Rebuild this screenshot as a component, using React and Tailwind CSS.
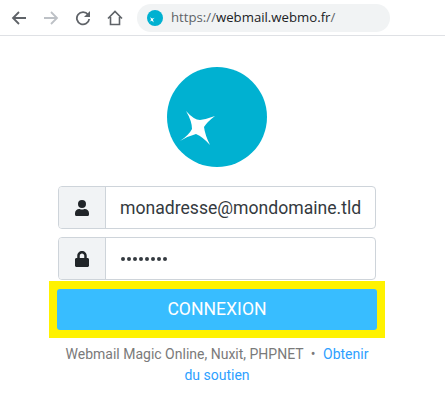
import React from "react";

const Star = ({ className }) => (
  <svg viewBox="0 0 100 100" className={className}>
    <circle cx="50" cy="50" r="50" fill="#00b1d1" />
    <path d="M19 44 Q27 53 33 53 Q40 52 48 49 Q40 55 37 60 Q38 68 43 78 Q36 70 29 67 Q21 69 13 74 Q22 68 25 62 Q25 54 19 44 Z" fill="#ffffff" />
  </svg>
);

export default function App() {
  return (
    <div className="w-[445px] h-[420px] bg-white overflow-hidden" style={{ fontFamily: "Roboto, sans-serif" }}>
      <div className="h-[36px] flex items-center border-b border-[#dfe1e5] pt-[1px]">
        <div className="flex items-center ml-[11px] gap-[16px]">
          <svg width="16" height="16" viewBox="0 0 16 16" fill="none" stroke="#5f6368" strokeWidth="1.8"><path d="M15 8H2M8 2L2 8l6 6" /></svg>
          <svg width="16" height="16" viewBox="0 0 16 16" fill="none" stroke="#bdc1c6" strokeWidth="1.8"><path d="M1 8h13M8 2l6 6-6 6" /></svg>
          <svg width="16" height="16" viewBox="0 0 16 16" fill="none" stroke="#5f6368" strokeWidth="1.8"><path d="M13 4.500A6.200 6.200 0 1 0 14.200 9" /><path d="M15 1v6H9z" fill="#5f6368" stroke="none" /></svg>
          <svg width="16" height="16" viewBox="0 0 16 16" fill="none" stroke="#5f6368" strokeWidth="1.6"><path d="M1 8.500L8 1.500l7 7M3.500 7v7.500h9V7" /></svg>
        </div>
        <div className="ml-[14px] w-[253px] h-[28px] rounded-full bg-[#f1f3f4] flex items-center pl-[10px]">
          <Star className="w-[16px] h-[16px] shrink-0" />
          <span className="ml-[8px] text-[13.2px] leading-none text-[#202124]" style={{ fontFamily: "'Open Sans', sans-serif" }}>
            <span className="text-[#5f6368]">https://</span>webmail.webmo.fr<span className="text-[#5f6368]">/</span>
          </span>
        </div>
      </div>

      <div className="flex ml-[167px] mt-[31px]">
        <Star className="w-[100px] h-[100px]" />
      </div>

      <div className="w-[318px] ml-[58px] mt-[19px] flex flex-col gap-[8px]">
        <div className="flex h-[43px] border border-[#ced4da] rounded-[4px] overflow-hidden">
          <div className="w-[47px] bg-[#f1f3f5] border-r border-[#ced4da] flex items-center justify-center">
            <svg width="14" height="16" viewBox="0 0 448 512" fill="#212529"><path d="M224 256a128 128 0 1 0 0-256 128 128 0 0 0 0 256zm89.600 32h-16.700a174 174 0 0 1-145.800 0h-16.700A134.400 134.400 0 0 0 0 422.400V464a48 48 0 0 0 48 48h352a48 48 0 0 0 48-48v-41.600A134.400 134.400 0 0 0 313.600 288z" /></svg>
          </div>
          <div className="flex-1 flex items-center pl-[14px] pt-[1px] text-[17.6px] text-[#343a40] whitespace-nowrap">monadresse@mondomaine.tld</div>
        </div>
        <div className="flex h-[43px] border border-[#ced4da] rounded-[4px] overflow-hidden">
          <div className="w-[47px] bg-[#f1f3f5] border-r border-[#ced4da] flex items-center justify-center">
            <svg width="14" height="16" viewBox="0 0 448 512" fill="#212529"><path d="M400 224h-24v-72C376 68 308 0 224 0S72 68 72 152v72H48c-26.500 0-48 21.500-48 48v192c0 26.500 21.500 48 48 48h352c26.500 0 48-21.500 48-48V272c0-26.500-21.500-48-48-48zm-104 0H152v-72c0-39.700 32.300-72 72-72s72 32.300 72 72v72z" /></svg>
          </div>
          <div className="flex-1 flex items-center pl-[15px] gap-[2px]">
            {Array.from({ length: 8 }).map((_, i) => (
              <span key={i} className="w-[4px] h-[4px] rounded-full bg-[#343a40]" />
            ))}
          </div>
        </div>
      </div>

      <div className="ml-[49px] mt-[1px] w-[336px] h-[57px] bg-[#fff200] flex items-center justify-center">
        <div className="w-[320px] h-[41px] rounded-[3px] bg-[#38bdff] text-white text-[17.6px] flex items-center justify-center">CONNEXION</div>
      </div>

      <div className="w-[310px] ml-[62px] mt-[6px] text-center text-[14px] leading-[21px] text-[#7a7a7a]">
        Webmail Magic Online, Nuxit, PHPNET <span className="mx-[4px]">•</span> <span className="text-[#2e9fff]">Obtenir du soutien</span>
      </div>
    </div>
  );
}
